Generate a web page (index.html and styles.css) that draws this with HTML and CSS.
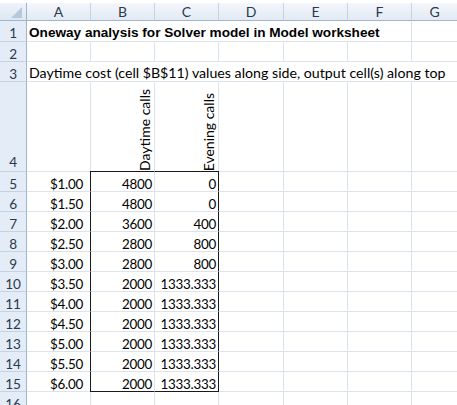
FILE: index.html
```
<!DOCTYPE html>
<html>
<head>
<meta charset="utf-8">
<link rel="stylesheet" href="styles.css">
</head>
<body>
<div class="sheet">
  <div class="corner"><svg width="26" height="18" viewBox="0 0 26 18"><polygon points="11,15 22,15 22,4" fill="#b7c7dc"/></svg></div>
  <div class="ch">A</div><div class="ch">B</div><div class="ch">C</div><div class="ch">D</div><div class="ch">E</div><div class="ch">F</div><div class="ch last">G</div>

  <div class="rh">1</div><div class="c title span6">Oneway analysis for Solver model in Model worksheet</div><div class="c last"></div>
  <div class="rh">2</div><div class="c"></div><div class="c"></div><div class="c"></div><div class="c"></div><div class="c"></div><div class="c"></div><div class="c last"></div>
  <div class="rh">3</div><div class="c span7 text">Daytime cost (cell $B$11) values along side, output cell(s) along top</div>
  <div class="rh bottom">4</div><div class="c"></div><div class="c vert"><span>Daytime calls</span></div><div class="c vert"><span>Evening calls</span></div><div class="c"></div><div class="c"></div><div class="c"></div><div class="c last"></div>
</div>
<div class="sheet data" id="data"></div>
<script src="app.js"></script>
</body>
</html>
```
FILE: app.js
```
var rows = [
  ["$1.00","4800","0"],["$1.50","4800","0"],["$2.00","3600","400"],["$2.50","2800","800"],
  ["$3.00","2800","800"],["$3.50","2000","1333.333"],["$4.00","2000","1333.333"],["$4.50","2000","1333.333"],
  ["$5.00","2000","1333.333"],["$5.50","2000","1333.333"],["$6.00","2000","1333.333"],["","",""]
];
var html = "";
rows.forEach(function (r, i) {
  var n = i + 5;
  var cls = n === 5 ? " top" : (n === 15 ? " end" : "");
  if (n === 16) cls = " none";
  html += '<div class="rh">' + n + '</div>' +
    '<div class="c num a">' + r[0] + '</div>' +
    '<div class="c num b' + cls + '">' + r[1] + '</div>' +
    '<div class="c num cc' + cls + '">' + r[2] + '</div>' +
    '<div class="c"></div><div class="c"></div><div class="c"></div><div class="c last"></div>';
});
document.getElementById("data").innerHTML = html;
```
FILE: styles.css
```
html, body { margin: 0; padding: 0; background: #fff; }
body { width: 457px; height: 405px; overflow: hidden; padding-top: 3px; box-sizing: border-box; }
.sheet {
  display: grid;
  grid-template-columns: 27px 64px 64px 64px 65px 64px 64px 45px;
  grid-template-rows: 18px 21px 20px 20px 90px;
  font-family: Lato, "Open Sans", sans-serif;
  font-size: 14.2px;
  color: #000;
}
.sheet.data { grid-template-rows: repeat(12, 20px); }
.corner {
  background: linear-gradient(#eef3fa, #dde7f3);
  border-right: 1px solid #9eb6ce;
  border-bottom: 1px solid #9eb6ce;
  box-sizing: border-box;
}
.corner svg { display: block; }
.ch {
  background: linear-gradient(#f4f7fc, #e3eaf4);
  border-right: 1px solid #c5d2e3;
  border-bottom: 1px solid #9eb6ce;
  box-sizing: border-box;
  text-align: center;
  line-height: 18px;
  color: #2a3a4c;
  font-size: 14px;
}
.ch.last { border-right: none; }
.rh {
  background: #e4ecf7;
  border-right: 1px solid #9eb6ce;
  border-bottom: 1px solid #c5d2e3;
  box-sizing: border-box;
  text-align: center;
  line-height: 18px;
  padding-top: 3px;
  color: #2a3a4c;
  font-size: 13.6px;
  letter-spacing: -0.2px;
}
.rh.bottom { display: flex; align-items: flex-end; justify-content: center; padding-bottom: 0; }
.c {
  border-right: 1px solid #dde3ed;
  border-bottom: 1px solid #dde3ed;
  box-sizing: border-box;
  white-space: nowrap;
  line-height: 18px;
  padding-top: 2px;
  overflow: visible;
}
.c.last { border-right: none; }
.span6 { grid-column: span 6; }
.span7 { grid-column: span 7; border-right: none; }
.title {
  font-family: "Liberation Sans", Arial, sans-serif;
  font-weight: bold;
  font-size: 13.6px;
  padding-left: 2px;
  padding-top: 3px;
}
.text { padding-left: 2px; }
.vert { display: flex; justify-content: flex-end; align-items: flex-end; padding: 0 1px 0 0; font-size: 14px; }
.vert span { writing-mode: vertical-rl; transform: rotate(180deg); line-height: 16px; }
.num { text-align: right; padding-right: 2px; font-size: 13.4px; letter-spacing: -0.25px; padding-top: 3px; }
.num.a { padding-right: 7px; }
.b { border-left: 1px solid #1a1a1a; margin-left: -1px; }
.cc { border-right: 1px solid #1a1a1a; }
.b.top, .cc.top { border-top: 1px solid #1a1a1a; margin-top: -1px; }
.b.end, .cc.end { border-bottom: 1px solid #1a1a1a; }
.b.none { margin-left: 0; border-left: none; }
.cc.none { border-right-color: #dde3ed; }
```
